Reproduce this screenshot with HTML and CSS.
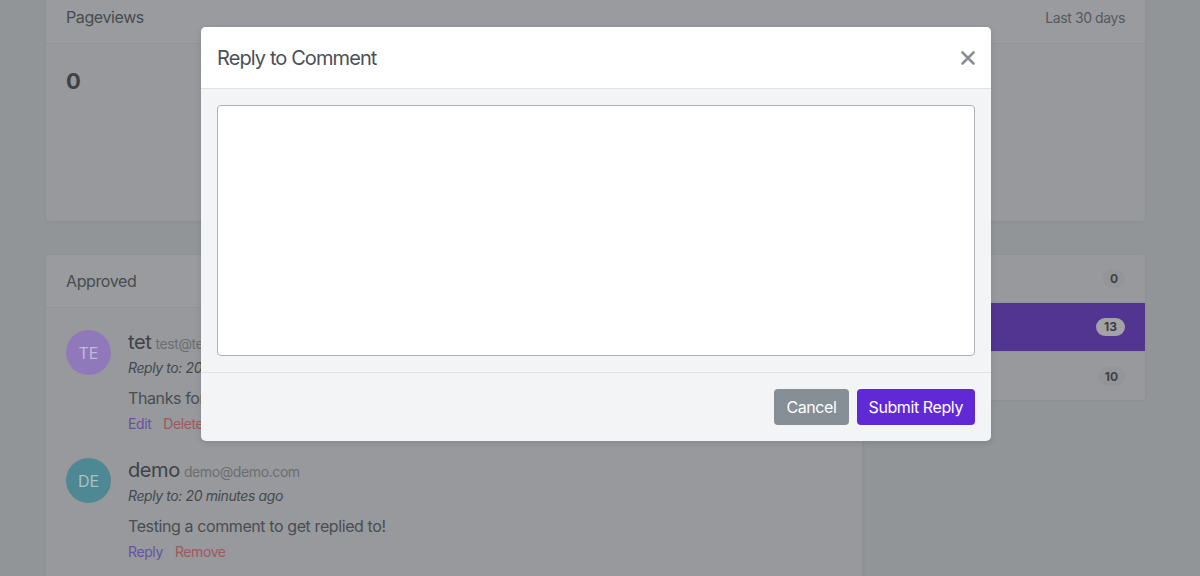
FILE: index.html
```html
<!DOCTYPE html>
<html lang="en">
<head>
<meta charset="utf-8">
<title>Comments</title>
<link rel="stylesheet" href="styles.css">
</head>
<body>
<main class="page">
  <section class="card card-stats">
    <header class="card-header">
      <span class="card-title">Pageviews</span>
      <span class="card-meta">Last 30 days</span>
    </header>
    <div class="card-body">
      <div class="stat-value">0</div>
    </div>
  </section>

  <div class="columns">
    <section class="card card-comments">
      <header class="card-header">
        <span class="card-title">Approved</span>
      </header>
      <div class="comment-list">
        <article class="comment">
          <div class="avatar avatar-purple">TE</div>
          <div class="comment-main">
            <div class="comment-author"><span class="author-name">tet</span> <span class="author-email">test@test.com</span></div>
            <div class="comment-reply">Reply to: 20 minutes ago</div>
            <p class="comment-text">Thanks for the comment!</p>
            <div class="comment-actions"><a class="link-primary">Edit</a><a class="link-danger">Delete</a></div>
          </div>
        </article>
        <article class="comment">
          <div class="avatar avatar-teal">DE</div>
          <div class="comment-main">
            <div class="comment-author"><span class="author-name">demo</span> <span class="author-email">demo@demo.com</span></div>
            <div class="comment-reply">Reply to: 20 minutes ago</div>
            <p class="comment-text">Testing a comment to get replied to!</p>
            <div class="comment-actions"><a class="link-primary">Reply</a><a class="link-danger">Remove</a></div>
          </div>
        </article>
      </div>
    </section>

    <aside class="card card-filter">
      <div class="filter-item"><span>Pending</span><span class="badge">0</span></div>
      <div class="filter-item active"><span>Approved</span><span class="badge">13</span></div>
      <div class="filter-item"><span>Spam</span><span class="badge">10</span></div>
    </aside>
  </div>
</main>

<div class="modal" role="dialog" aria-labelledby="modal-title">
  <header class="modal-header">
    <h5 class="modal-title" id="modal-title">Reply to Comment</h5>
    <button class="modal-close" aria-label="Close">
      <svg width="14" height="14" viewBox="0 0 14 14" aria-hidden="true"><path d="M1.5 1.5 L12.5 12.5 M12.5 1.5 L1.5 12.5" stroke="currentColor" stroke-width="2.6" stroke-linecap="round"/></svg>
    </button>
  </header>
  <div class="modal-body">
    <textarea class="reply-input"></textarea>
  </div>
  <footer class="modal-footer">
    <button class="btn btn-secondary">Cancel</button>
    <button class="btn btn-primary">Submit Reply</button>
  </footer>
</div>
</body>
</html>
```

FILE: styles.css
```css
* { box-sizing: border-box; }

html, body {
  margin: 0;
  height: 100%;
}

body {
  background: #929598;
  font-family: Inter, "Noto Sans", "Liberation Sans", sans-serif;
  letter-spacing: -0.025em;
  color: #44474b;
  overflow: hidden;
  position: relative;
}

.page {
  padding: 0 55px 0 46px;
  margin-top: -9px;
}

.card {
  background: #97999c;
  border-radius: 4px;
  box-shadow: 0 1px 3px rgba(0, 0, 0, 0.06);
}

.card-header {
  height: 53px;
  display: flex;
  align-items: center;
  justify-content: space-between;
  padding: 0 20px;
  background: #999b9e;
  border-bottom: 1px solid #929497;
  border-radius: 4px 4px 0 0;
}

.card-title {
  font-size: 16px;
  color: #484b4f;
}

.card-meta {
  font-size: 14px;
  color: #56595d;
}

.card-stats .card-body {
  height: 177px;
  padding: 24px 20px;
}

.stat-value {
  font-size: 22px;
  font-weight: 700;
  line-height: 26px;
  color: #3e4145;
}

.columns {
  display: grid;
  grid-template-columns: 817px 1fr;
  gap: 18px;
  margin-top: 34px;
  align-items: start;
}

.card-comments {
  height: 400px;
  border-right: 1px solid #8f9194;
}

.comment-list {
  padding: 22px 20px;
}

.comment {
  display: flex;
  gap: 17px;
  margin-bottom: 24px;
}

.avatar {
  width: 45px;
  height: 45px;
  border-radius: 50%;
  flex: none;
  display: flex;
  align-items: center;
  justify-content: center;
  font-size: 16px;
  letter-spacing: 0;
}

.avatar-purple {
  background: #9079bb;
  color: #c3b8da;
}

.avatar-teal {
  background: #4e8892;
  color: #a7c2c7;
}

.comment-author {
  line-height: 24px;
  height: 24px;
}

.author-name {
  font-size: 20px;
  color: #3f4246;
  letter-spacing: -0.02em;
}

.author-email {
  font-size: 14px;
  color: #6b6e72;
}

.comment-reply {
  margin-top: 3px;
  font-size: 14px;
  line-height: 21px;
  font-style: italic;
  color: #46494d;
}

.comment-text {
  margin: 8px 0 0;
  font-size: 16px;
  line-height: 24px;
  color: #4a4d51;
}

.comment-actions {
  margin-top: 3px;
  font-size: 14px;
  line-height: 21px;
  display: flex;
  gap: 12px;
}

.link-primary { color: #6751a5; }
.link-danger { color: #a0585c; }

.card-filter {
  overflow: hidden;
}

.filter-item {
  height: 48px;
  display: flex;
  align-items: center;
  justify-content: space-between;
  padding: 0 20px;
  font-size: 16px;
  color: #45484c;
  border-bottom: 1px solid #929497;
}

.filter-item:last-child { border-bottom: none; }

.filter-item.active {
  background: #513590;
  color: #c9c3d9;
  height: 49px;
}

.badge {
  font-size: 12px;
  font-weight: 700;
  line-height: 13px;
  padding: 3px 7px;
  border-radius: 10px;
  background: #939598;
  color: #3f4246;
  letter-spacing: 0;
}

.filter-item.active .badge {
  background: #a3a3a6;
  color: #3d3d42;
  padding: 2px 8px;
  line-height: 14px;
}

/* Modal */
.modal {
  position: absolute;
  left: 201px;
  top: 27px;
  width: 790px;
  background: #f3f4f6;
  border-radius: 5px;
  overflow: hidden;
  box-shadow: 0 2px 6px rgba(0, 0, 0, 0.12);
}

.modal-header {
  background: #ffffff;
  height: 62px;
  padding: 0 16px;
  display: flex;
  align-items: center;
  justify-content: space-between;
  border-bottom: 1px solid #dfe2e6;
}

.modal-title {
  margin: 0;
  font-size: 20px;
  font-weight: 400;
  color: #4b5056;
  line-height: 30px;
  letter-spacing: -0.045em;
}

.modal-close {
  border: none;
  background: none;
  padding: 0;
  width: 14px;
  height: 14px;
  color: #8b9096;
  display: flex;
}

.modal-body {
  padding: 16px;
}

.reply-input {
  display: block;
  width: 100%;
  height: 251px;
  border: 1px solid #adb2b8;
  border-radius: 4px;
  background: #ffffff;
  resize: none;
  font: inherit;
}

.modal-footer {
  border-top: 1px solid #dfe2e6;
  padding: 16px;
  display: flex;
  justify-content: flex-end;
  gap: 8px;
}

.btn {
  height: 36px;
  padding: 0 12px;
  border: none;
  border-radius: 4px;
  font-family: inherit;
  font-size: 16px;
  letter-spacing: -0.025em;
  color: #ffffff;
}

.btn-secondary { background: #868e96; }
.btn-primary { background: #6129d6; }
```
